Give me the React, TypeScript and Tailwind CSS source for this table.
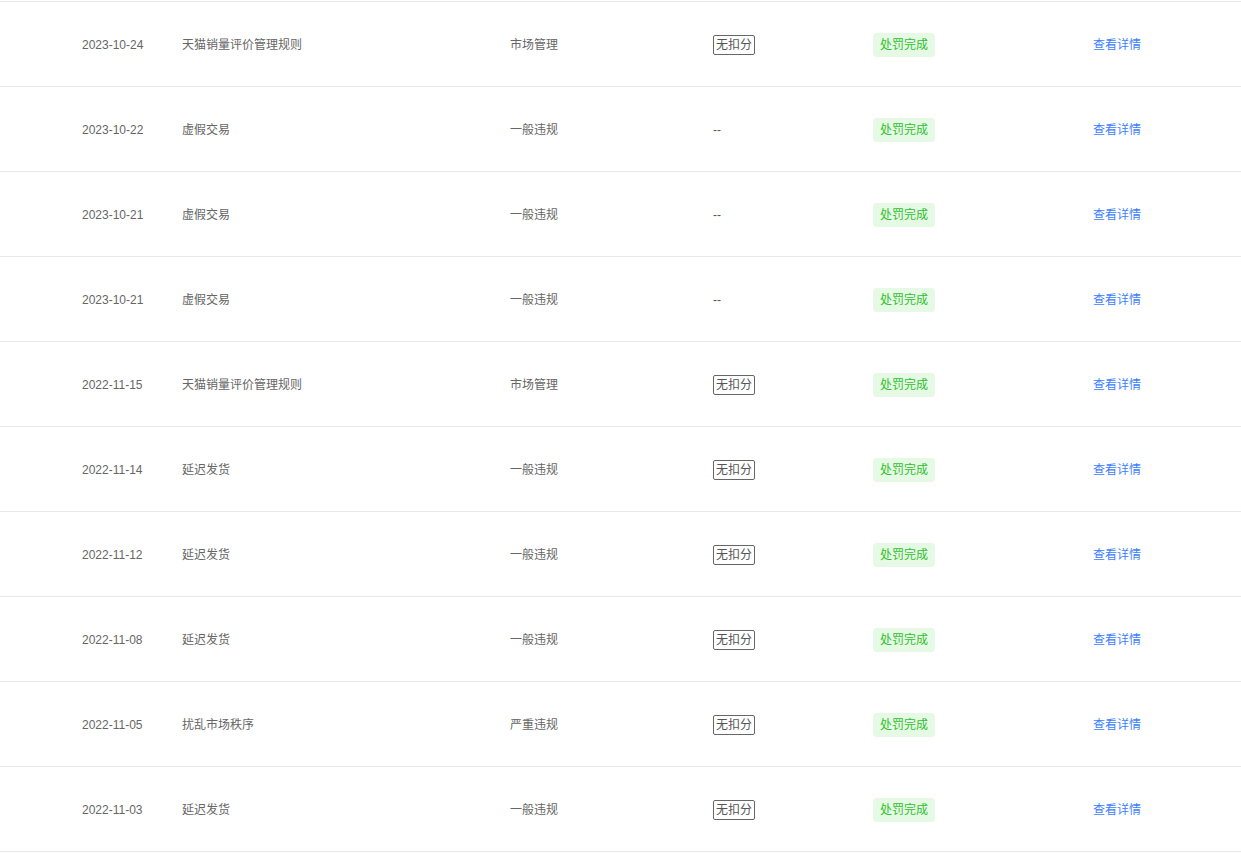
import React from "react";

type Row = { date: string; name: string; cat: string; score: boolean };

const rows: Row[] = [
  { date: "2023-10-24", name: "天猫销量评价管理规则", cat: "市场管理", score: true },
  { date: "2023-10-22", name: "虚假交易", cat: "一般违规", score: false },
  { date: "2023-10-21", name: "虚假交易", cat: "一般违规", score: false },
  { date: "2023-10-21", name: "虚假交易", cat: "一般违规", score: false },
  { date: "2022-11-15", name: "天猫销量评价管理规则", cat: "市场管理", score: true },
  { date: "2022-11-14", name: "延迟发货", cat: "一般违规", score: true },
  { date: "2022-11-12", name: "延迟发货", cat: "一般违规", score: true },
  { date: "2022-11-08", name: "延迟发货", cat: "一般违规", score: true },
  { date: "2022-11-05", name: "扰乱市场秩序", cat: "严重违规", score: true },
  { date: "2022-11-03", name: "延迟发货", cat: "一般违规", score: true },
];

export default function App() {
  return (
    <div
      className="w-[1241px] h-[854px] bg-white pt-px overflow-hidden text-[12px]"
      style={{ fontFamily: '"Liberation Sans", "Noto Sans CJK SC", sans-serif' }}
    >
      <div className="border-b border-[#e8e8e8]">
        {rows.map((r, i) => (
          <div
            key={i}
            className="grid grid-cols-[100px_328px_203px_160px_220px_1fr] items-center h-[85px] pl-[82px] pt-px border-t border-[#e8e8e8] text-[#666]"
          >
            <div>{r.date}</div>
            <div>{r.name}</div>
            <div>{r.cat}</div>
            <div>
              {r.score ? (
                <span className="inline-flex items-center h-[20px] px-[2px] border border-[#666] rounded-[2px] text-[#555] leading-none">
                  无扣分
                </span>
              ) : (
                <span className="text-[#555]">--</span>
              )}
            </div>
            <div>
              <span className="inline-flex items-center justify-center w-[62px] h-[24px] rounded-[4px] bg-[#e6f9e4] text-[#2fbf2f] leading-none">
                处罚完成
              </span>
            </div>
            <div>
              <span className="text-[#3d80ff] cursor-pointer">查看详情</span>
            </div>
          </div>
        ))}
      </div>
    </div>
  );
}
